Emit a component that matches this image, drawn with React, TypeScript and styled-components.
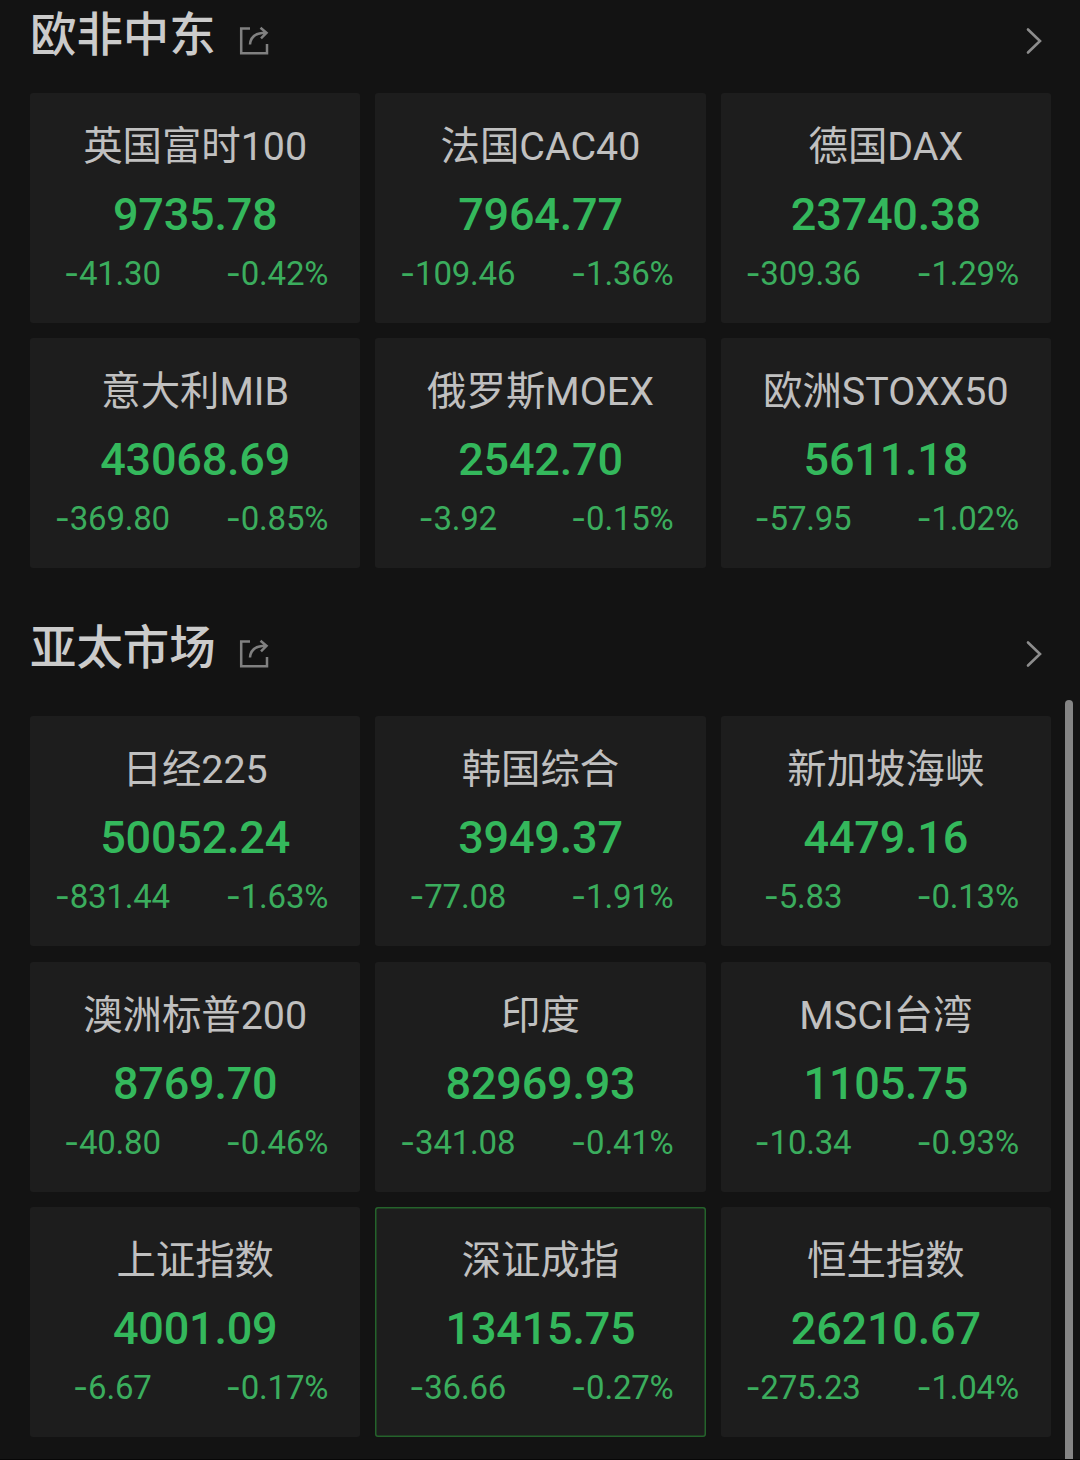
import React from 'react';
import styled, { createGlobalStyle } from 'styled-components';

const GlobalStyle = createGlobalStyle`
  html, body { margin: 0; background: #131313; }
  * { box-sizing: border-box; }
`;

const Page = styled.main`
  width: 1080px;
  height: 1460px;
  display: flex;
  justify-content: space-between;
  overflow: hidden;
  background: #131313;
  border-bottom: 1px solid #070707;
  font-family: Roboto, 'Noto Sans CJK SC', sans-serif;
`;

const Content = styled.div`
  width: 1051px;
  padding-left: 30px;
`;

const Section = styled.section<{ $last?: boolean }>`
  height: ${(p) => (p.$last ? 847 : 613)}px;
`;

const Header = styled.header<{ $height: number }>`
  height: ${(p) => p.$height}px;
  display: flex;
  align-items: flex-start;
`;

const Title = styled.h2`
  width: 186px;
  margin: 0;
  font-size: 46.4px;
  line-height: 71px;
  font-weight: 500;
  color: #cbcbcb;
  white-space: nowrap;
`;

const ShareIcon = styled.svg`
  width: 30px;
  height: 30px;
  margin: 26px 0 0 23px;
  fill: none;
  stroke: #808080;
  stroke-width: 2.5;
`;

const Chevron = styled.svg`
  width: 18px;
  height: 28px;
  margin: 27px 8px 0 auto;
  fill: none;
  stroke: #8d8d8d;
  stroke-width: 2.6;
  stroke-linecap: round;
`;

const Grid = styled.div<{ $gap: number }>`
  display: grid;
  grid-template-columns: repeat(3, 1fr);
  grid-auto-rows: 230px;
  gap: ${(p) => p.$gap}px 15px;
`;

const Card = styled.article<{ $active?: boolean }>`
  display: flex;
  flex-direction: column;
  align-items: center;
  padding-top: 29px;
  background: #1d1d1d;
  border-radius: 3px;
  box-shadow: ${(p) => (p.$active ? 'inset 0 0 0 1.5px #24632b' : 'none')};
`;

const Name = styled.div`
  font-size: 39.4px;
  line-height: 50px;
  color: #c0c0c0;
  white-space: nowrap;
`;

const Price = styled.div`
  margin-top: 15px;
  font-size: 45px;
  line-height: 56px;
  font-weight: 500;
  letter-spacing: -0.2px;
  color: #34b85c;
`;

const Changes = styled.div`
  width: 100%;
  margin-top: 11px;
  padding-right: 1px;
  display: grid;
  grid-template-columns: 1fr 1fr;
  font-size: 33px;
  line-height: 39px;
  letter-spacing: -0.2px;
  color: #3bad5d;
  text-align: center;
`;

const Sign = styled.span`
  font-family: Inter, sans-serif;
`;

const ScrollTrack = styled.div`
  width: 15px;
  padding-top: 700px;
`;

const ScrollThumb = styled.div`
  width: 8px;
  height: 780px;
  border-radius: 4px;
  background: #858585;
`;

type Quote = [name: string, price: string, change: string, percent: string];

const emea: Quote[] = [
  ['英国富时100', '9735.78', '-41.30', '-0.42%'],
  ['法国CAC40', '7964.77', '-109.46', '-1.36%'],
  ['德国DAX', '23740.38', '-309.36', '-1.29%'],
  ['意大利MIB', '43068.69', '-369.80', '-0.85%'],
  ['俄罗斯MOEX', '2542.70', '-3.92', '-0.15%'],
  ['欧洲STOXX50', '5611.18', '-57.95', '-1.02%'],
];

const asia: Quote[] = [
  ['日经225', '50052.24', '-831.44', '-1.63%'],
  ['韩国综合', '3949.37', '-77.08', '-1.91%'],
  ['新加坡海峡', '4479.16', '-5.83', '-0.13%'],
  ['澳洲标普200', '8769.70', '-40.80', '-0.46%'],
  ['印度', '82969.93', '-341.08', '-0.41%'],
  ['MSCI台湾', '1105.75', '-10.34', '-0.93%'],
  ['上证指数', '4001.09', '-6.67', '-0.17%'],
  ['深证成指', '13415.75', '-36.66', '-0.27%'],
  ['恒生指数', '26210.67', '-275.23', '-1.04%'],
];

function Delta({ value }: { value: string }) {
  return (
    <span>
      <Sign>{value[0]}</Sign>
      {value.slice(1)}
    </span>
  );
}

interface MarketProps {
  title: string;
  quotes: Quote[];
  headerHeight: number;
  rowGap: number;
  active?: string;
  last?: boolean;
}

function Market({ title, quotes, headerHeight, rowGap, active, last }: MarketProps) {
  return (
    <Section $last={last}>
      <Header $height={headerHeight}>
        <Title>{title}</Title>
        <ShareIcon viewBox="0 0 30 30">
          <path d="M11 2.5H2.2V27.2H28V18" />
          <path d="M11 18.5C11.5 11.5 16.5 6.8 27 6.8M21.5 1.8L27.5 6.8L22 12.3" />
        </ShareIcon>
        <Chevron viewBox="0 0 18 28">
          <path d="M3 2.5L15 14L3 25.5" />
        </Chevron>
      </Header>
      <Grid $gap={rowGap}>
        {quotes.map(([name, price, change, percent]) => (
          <Card key={name} $active={name === active}>
            <Name>{name}</Name>
            <Price>{price}</Price>
            <Changes>
              <Delta value={change} />
              <Delta value={percent} />
            </Changes>
          </Card>
        ))}
      </Grid>
    </Section>
  );
}

export default function App() {
  return (
    <>
      <GlobalStyle />
      <Page>
        <Content>
          <Market title="欧非中东" quotes={emea} headerHeight={93} rowGap={15} />
          <Market title="亚太市场" quotes={asia} headerHeight={103} rowGap={15.5} active="深证成指" last />
        </Content>
        <ScrollTrack>
          <ScrollThumb />
        </ScrollTrack>
      </Page>
    </>
  );
}
